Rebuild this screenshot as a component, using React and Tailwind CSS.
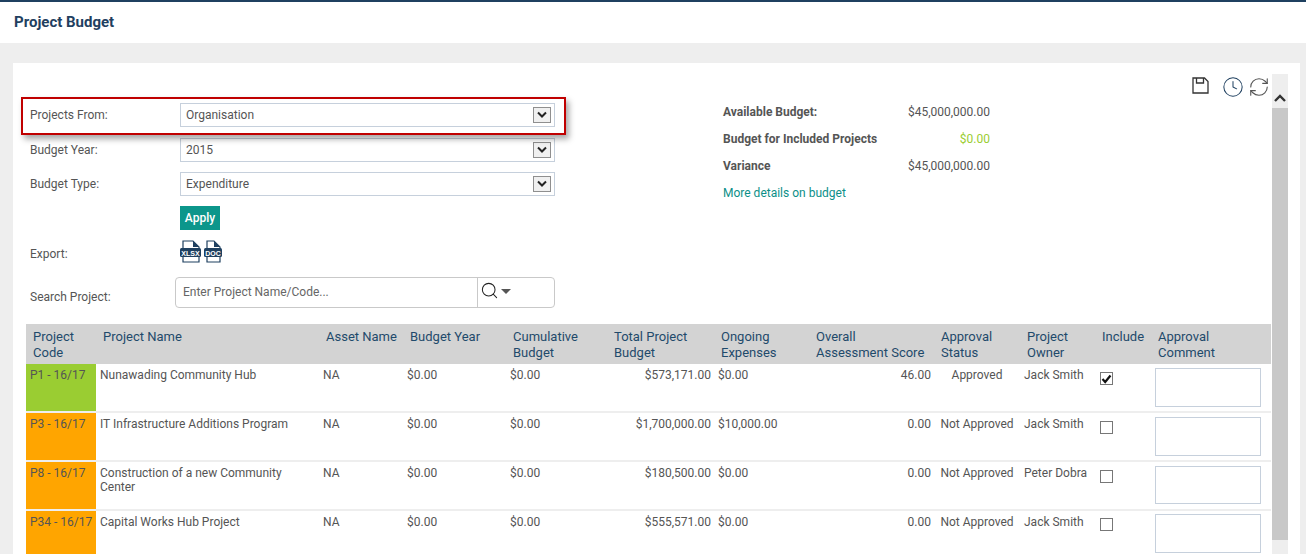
import { RefreshCw, Clock, Search } from "lucide-react";

const columns = [
  { title: ["Project", "Code"], width: 70 },
  { title: ["Project Name"], width: 223 },
  { title: ["Asset Name"], width: 84 },
  { title: ["Budget Year"], width: 103 },
  { title: ["Cumulative", "Budget"], width: 101 },
  { title: ["Total Project", "Budget"], width: 107 },
  { title: ["Ongoing", "Expenses"], width: 95 },
  { title: ["Overall", "Assessment Score"], width: 125 },
  { title: ["Approval", "Status"], width: 86 },
  { title: ["Project", "Owner"], width: 75 },
  { title: ["Include"], width: 56 },
  { title: ["Approval", "Comment"], width: 120 },
];

const rows = [
  { code: "P1 - 16/17", color: "bg-[#9acd32]", name: "Nunawading Community Hub", total: "$573,171.00", ongoing: "$0.00", score: "46.00", status: "Approved", owner: "Jack Smith", checked: true, h: "h-[48px]", box: "h-[39px]", pad: "pt-[4px]" },
  { code: "P3 - 16/17", color: "bg-[#ffa500]", name: "IT Infrastructure Additions Program", total: "$1,700,000.00", ongoing: "$10,000.00", score: "0.00", status: "Not Approved", owner: "Jack Smith", checked: false, h: "h-[49px]", box: "h-[39px]", pad: "pt-[4px]" },
  { code: "P8 - 16/17", color: "bg-[#ffa500]", name: "Construction of a new Community Center", total: "$180,500.00", ongoing: "$0.00", score: "0.00", status: "Not Approved", owner: "Peter Dobra", checked: false, h: "h-[49px]", box: "h-[38px]", pad: "pt-[4px]" },
  { code: "P34 - 16/17", color: "bg-[#ffa500]", name: "Capital Works Hub Project", total: "$555,571.00", ongoing: "$0.00", score: "0.00", status: "Not Approved", owner: "Jack Smith", checked: false, h: "h-[49px]", box: "h-[39px]", pad: "pt-[3px]" },
];

function SelectRow({ label, value, className }) {
  return (
    <div className={`flex items-center ${className}`}>
      <label className="w-[154px] pl-[4px]">{label}</label>
      <div className="flex h-[24px] w-[375px] items-center justify-between border border-[#c6d0dc] bg-white pl-[5px] pr-[3px]">
        <span>{value}</span>
        <span className="flex h-[16px] w-[18px] items-center justify-center border border-[#8f8f8f] bg-[#f0f0f0]">
          <svg width="12" height="8" viewBox="0 0 12 8" fill="none" stroke="#222" strokeWidth="2">
            <path d="M2 1.5 L6 5.5 L10 1.5" />
          </svg>
        </span>
      </div>
    </div>
  );
}

function FileIcon({ label, width, size }) {
  return (
    <svg width={width} height="23" viewBox={`0 0 ${width} 23`}>
      <path d={`M3 1 H${width - 8} L${width - 2} 7 V22 H3 Z`} fill="#fff" stroke="#1f4060" strokeWidth="1.2" />
      <path d={`M${width - 8} 1 V7 H${width - 2} Z`} fill="#1f4060" />
      <rect x="0" y="8" width={width} height="9" rx="1.5" fill="#1f4060" />
      <text x={width / 2} y="15.6" textAnchor="middle" fill="#fff" fontSize={size} fontWeight="700" fontFamily="Liberation Sans, sans-serif">
        {label}
      </text>
    </svg>
  );
}

function Checkbox({ checked }) {
  return (
    <span className="mt-[4px] ml-[5px] flex h-[13px] w-[13px] items-center justify-center border border-[#777] bg-white">
      {checked && (
        <svg width="11" height="10" viewBox="0 0 11 10" fill="none" stroke="#111" strokeWidth="2.2">
          <path d="M1.5 5 L4.2 8 L9.5 1.5" />
        </svg>
      )}
    </span>
  );
}

export default function App() {
  return (
    <div className="h-[554px] overflow-hidden bg-[#eeeeee] font-['Roboto',sans-serif] text-[12px] text-[#555]">
      <header className="flex h-[43px] items-center border-t-2 border-[#1f4060] bg-white pl-[14px]">
        <h1 className="text-[15px] font-bold text-[#1f4060]">Project Budget</h1>
      </header>

      <div className="ml-[13px] mr-[6px] mt-[20px] flex h-[600px] bg-white">
        <div className="w-[1259px] pl-[13px] pt-[14px]">
          {/* toolbar */}
          <div className="flex h-[22px] items-start justify-end pr-[2px]">
            <svg className="mr-[13px]" width="17" height="17" viewBox="0 0 17 17" fill="none" stroke="#333" strokeWidth="1.3">
              <path d="M1 1 H12.5 L16 4.5 V16 H1 Z" />
              <path d="M4.5 1 V6 H11.5 V1" />
            </svg>
            <Clock className="mr-[4px] -mt-[1px]" size={22} strokeWidth={1.1} color="#1f4060" />
            <RefreshCw className="-mt-[1px]" size={22} strokeWidth={1.2} color="#555" />
          </div>

          {/* filters and budget summary */}
          <div className="flex">
            <div className="w-[697px] pt-[4px]">
              <SelectRow label="Projects From:" value="Organisation" />
              <SelectRow label="Budget Year:" value="2015" className="mt-[11px]" />
              <SelectRow label="Budget Type:" value="Expenditure" className="mt-[10px]" />
              <div className="mt-[10px] pl-[154px]">
                <button className="h-[24px] w-[40px] bg-[#0c968b] font-medium text-white">Apply</button>
              </div>
              <div className="mt-[10px] flex h-[23px] items-center">
                <label className="w-[154px] pl-[4px] pt-[5px]">Export:</label>
                <div className="flex gap-[3px]">
                  <FileIcon label="XLSX" width={21} size={7} />
                  <FileIcon label="DOC" width={18} size={7} />
                </div>
              </div>
              <div className="mt-[14px] flex items-center">
                <label className="w-[149px] pl-[4px] pt-[9px]">Search Project:</label>
                <div className="flex h-[31px] w-[380px] rounded-[4px] border border-[#c9c9c9] bg-white">
                  <div className="flex w-[302px] items-center border-r border-[#c9c9c9] pl-[7px] pb-[1px] text-[#666]">Enter Project Name/Code...</div>
                  <div className="flex items-start pl-[2px] pt-[3px]">
                    <Search size={19} strokeWidth={1.3} color="#222" />
                    <span className="ml-[2px] mt-[8px] h-0 w-0 border-x-[5px] border-t-[5px] border-x-transparent border-t-[#555]"></span>
                  </div>
                </div>
              </div>
            </div>

            <div className="-mt-[1px] w-[267px]">
              <div className="flex h-[27px] items-center justify-between">
                <span className="font-bold">Available Budget:</span>
                <span>$45,000,000.00</span>
              </div>
              <div className="flex h-[27px] items-center justify-between">
                <span className="font-bold">Budget for Included Projects</span>
                <span className="text-[#9acd32]">$0.00</span>
              </div>
              <div className="flex h-[27px] items-center justify-between">
                <span className="font-bold">Variance</span>
                <span>$45,000,000.00</span>
              </div>
              <div className="flex h-[27px] items-center text-[#0c8f88]">More details on budget</div>
            </div>
          </div>

          {/* projects table */}
          <table className="mt-[16px] w-[1245px] table-fixed border-collapse">
            <colgroup>
              {columns.map((c, i) => (
                <col key={i} style={{ width: c.width }} />
              ))}
            </colgroup>
            <thead>
              <tr className="h-[40px] bg-[#d3d3d3] text-[13px] leading-[16px] text-[#1f4a6b]">
                {columns.map((c, i) => (
                  <th key={i} className="pl-[7px] pt-[5px] text-left align-top font-normal whitespace-nowrap">
                    {c.title.map((t) => (
                      <div key={t}>{t}</div>
                    ))}
                  </th>
                ))}
              </tr>
            </thead>
            <tbody className="leading-[14px]">
              {rows.map((r) => (
                <tr key={r.code} className={`${r.h} border-b-2 border-[#eeeeee] align-top`}>
                  <td className={`${r.color} pl-[4px] pt-[4px] whitespace-nowrap`}>{r.code}</td>
                  <td className="pl-[4px] pt-[4px] pr-[20px]">{r.name}</td>
                  <td className="pl-[4px] pt-[4px]">NA</td>
                  <td className="pl-[4px] pt-[4px]">$0.00</td>
                  <td className="pl-[4px] pt-[4px]">$0.00</td>
                  <td className="pr-[3px] pt-[4px] text-right">{r.total}</td>
                  <td className="pl-[4px] pt-[4px]">{r.ongoing}</td>
                  <td className="pr-[3px] pt-[4px] text-right">{r.score}</td>
                  <td className="pt-[4px] text-center whitespace-nowrap">{r.status}</td>
                  <td className="pl-[4px] pt-[4px] whitespace-nowrap">{r.owner}</td>
                  <td className={r.pad}>
                    <Checkbox checked={r.checked} />
                  </td>
                  <td className={`pl-[4px] ${r.pad}`}>
                    <div className={`${r.box} w-[106px] border border-[#c6d0dc] bg-white`}></div>
                  </td>
                </tr>
              ))}
            </tbody>
          </table>
        </div>

        {/* scrollbar */}
        <div className="mt-[11px] h-[600px] w-[16px] bg-[#eeeeee]">
          <div className="flex h-[34px] items-end justify-center pb-[6px]">
            <svg width="12" height="8" viewBox="0 0 12 8" fill="none" stroke="#333" strokeWidth="2.4">
              <path d="M1 7 L6 2 L11 7" />
            </svg>
          </div>
          <div className="h-[432px] bg-[#c8c8c8]"></div>
        </div>
      </div>

      {/* highlight box round the first filter */}
      <div className="pointer-events-none absolute left-[21px] top-[97px] h-[38px] w-[545px] border-2 border-[#c00000] shadow-[3px_4px_6px_rgba(0,0,0,0.35)]"></div>
    </div>
  );
}
